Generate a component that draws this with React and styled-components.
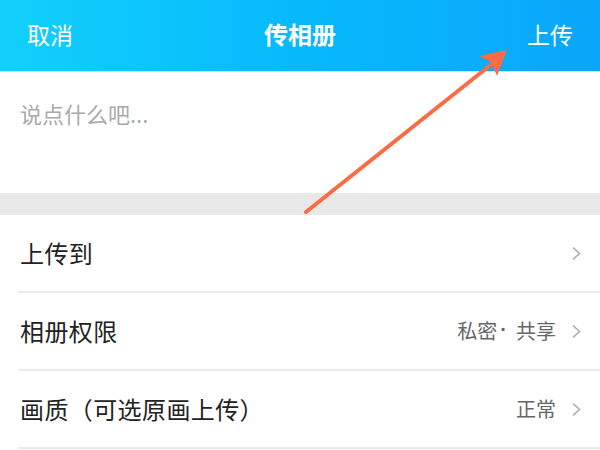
import React from 'react'
import styled, { createGlobalStyle } from 'styled-components'

const GlobalStyle = createGlobalStyle`
  html, body {
    margin: 0;
    padding: 0;
    background: #fff;
  }
  body {
    font-family: "Noto Sans CJK SC", "Noto Sans", sans-serif;
  }
`

const Page = styled.div`
  position: relative;
  width: 600px;
  height: 450px;
  overflow: hidden;
  background: #fff;
`

const Header = styled.div`
  height: 72px;
  display: flex;
  align-items: center;
  justify-content: space-between;
  padding: 0 27px 0 27px;
  box-sizing: border-box;
  background: linear-gradient(90deg, #12d0fb 0%, #07b9fb 50%, #0aa6fb 100%);
  color: #fff;
  font-size: 23px;
  border-bottom: 1px solid #b8ecfb;
`

const HeaderButton = styled.span`
  width: 60px;
  text-align: ${p => (p.right ? 'right' : 'left')};
  line-height: 1;
  margin-top: -3px;
`

const Title = styled.span`
  font-weight: 700;
  font-size: 24px;
  line-height: 1;
  margin-top: -3px;
`

const Composer = styled.div`
  height: 121px;
  padding: 30px 20px 0;
  box-sizing: border-box;
  color: #aaaaaa;
  font-size: 22px;
  line-height: 1;
`

const Gap = styled.div`
  height: 22px;
  background: #e8e8e8;
`

const List = styled.div`
  display: flex;
  flex-direction: column;
`

const Row = styled.div`
  height: 78px;
  display: flex;
  align-items: center;
  justify-content: space-between;
  padding: 0 18px 0 2px;
  margin-left: 18px;
  box-sizing: border-box;
  border-bottom: 2px solid #ebebeb;
`

const Label = styled.span`
  color: #222;
  font-size: 24px;
  letter-spacing: 0.4px;
  line-height: 1;
`

const Value = styled.span`
  display: flex;
  align-items: center;
  gap: 15px;
  color: #666;
  font-size: 20px;
  line-height: 1;
`

const Dot = styled.span`
  display: inline-block;
  font-family: "Liberation Sans", sans-serif;
  font-weight: 700;
  margin: 0 9px 0 3px;
  transform: translateY(-3px);
`

const Chevron = () => (
  <svg width="11" height="15" viewBox="0 0 11 15">
    <path d="M2 1.5 L8.5 7.5 L2 13.5" fill="none" stroke="#ababab" strokeWidth="1.6" />
  </svg>
)

const ArrowLayer = styled.svg`
  position: absolute;
  left: 0;
  top: 0;
  pointer-events: none;
`

const rows = [
  { label: '上传到', value: null },
  { label: '相册权限', value: <>私密<Dot>·</Dot>共享</> },
  { label: '画质（可选原画上传）', value: '正常' },
]

const App = () => (
  <Page>
    <GlobalStyle />
    <Header>
      <HeaderButton>取消</HeaderButton>
      <Title>传相册</Title>
      <HeaderButton right>上传</HeaderButton>
    </Header>
    <Composer>说点什么吧...</Composer>
    <Gap />
    <List>
      {rows.map((row, index) => (
        <Row key={`row-${index}`}>
          <Label>{row.label}</Label>
          <Value>
            {row.value && <span>{row.value}</span>}
            <Chevron />
          </Value>
        </Row>
      ))}
    </List>
    <ArrowLayer width="600" height="450" viewBox="0 0 600 450">
      <line x1="306" y1="212" x2="498" y2="59" stroke="#fd6b43" strokeWidth="4" strokeLinecap="round" />
      <polygon points="507,50 479,56 491,62 497,76" fill="#fd6b43" />
    </ArrowLayer>
  </Page>
)

export default App
